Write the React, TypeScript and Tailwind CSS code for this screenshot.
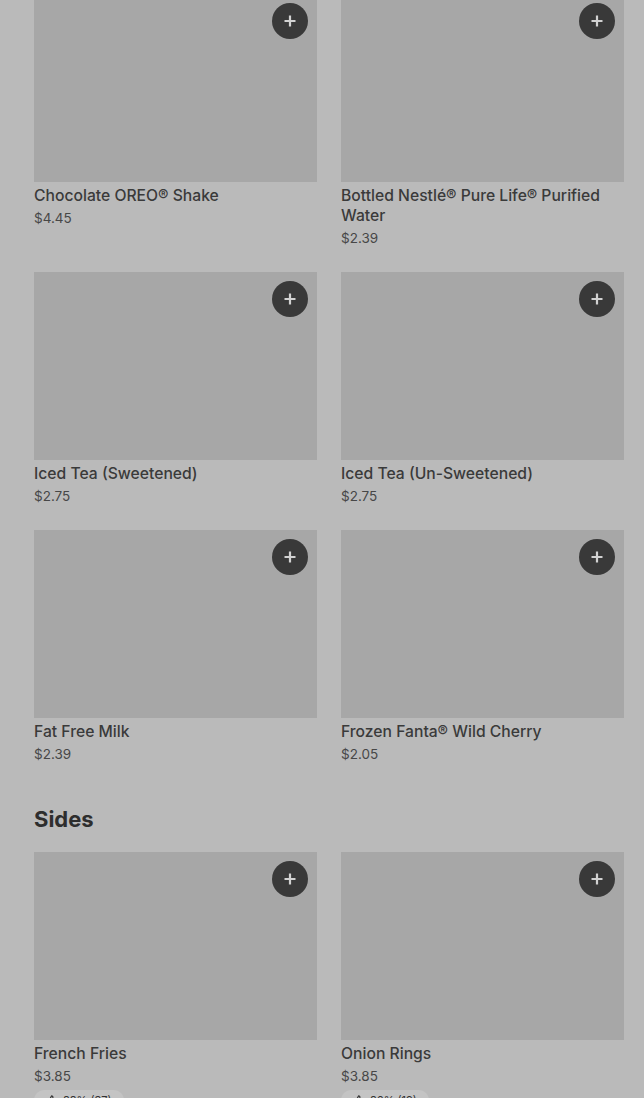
import { ThumbsUp } from "lucide-react";

type Item = { name: string; price: string; rating?: string };

const drinks: Item[] = [
  { name: "Chocolate OREO® Shake", price: "$4.45" },
  { name: "Bottled Nestlé® Pure Life® Purified Water", price: "$2.39" },
  { name: "Iced Tea (Sweetened)", price: "$2.75" },
  { name: "Iced Tea (Un-Sweetened)", price: "$2.75" },
  { name: "Fat Free Milk", price: "$2.39" },
  { name: "Frozen Fanta® Wild Cherry", price: "$2.05" },
];

const sides: Item[] = [
  { name: "French Fries", price: "$3.85", rating: "88% (37)" },
  { name: "Onion Rings", price: "$3.85", rating: "86% (19)" },
];

function AddButton() {
  return (
    <button className="absolute top-[9px] right-[9px] w-9 h-9 rounded-full bg-[#393939] flex items-center justify-center">
      <svg width="14" height="14" viewBox="0 0 14 14" fill="none">
        <path d="M7 1.5v11M1.5 7h11" stroke="#d2d2d2" strokeWidth="2.2" />
      </svg>
    </button>
  );
}

function ItemCard({ item }: { item: Item }) {
  return (
    <div className="flex flex-col">
      <div className="relative h-[188px] bg-[#a7a7a7]">
        <AddButton />
      </div>
      <div className="mt-[4px] text-[15.7px] leading-5 font-medium text-[#3a3a3a]">{item.name}</div>
      <div className="mt-[2px] text-[13.5px] leading-5 text-[#474747]">{item.price}</div>
      {item.rating && (
        <div className="mt-[4px] self-start flex items-center gap-1.5 rounded-full bg-[#c4c4c4] pl-3 pr-3 h-5 text-[11px] leading-5 text-[#333333]">
          <ThumbsUp size={11} strokeWidth={2.5} />
          <span>{item.rating}</span>
        </div>
      )}
    </div>
  );
}

export default function App() {
  return (
    <div className="w-[644px] h-[1098px] overflow-hidden bg-[#bababa] font-['Inter',sans-serif]">
      <div className="pl-[34px] pr-[20px] -mt-[6px]">
        <div className="grid grid-cols-2 gap-x-6 gap-y-6">
          {drinks.map((d) => (
            <ItemCard key={d.name} item={d} />
          ))}
        </div>
        <h2 className="mt-[39px] mb-[17px] text-[22px] leading-8 font-bold text-[#2e2e2e]">Sides</h2>
        <div className="grid grid-cols-2 gap-x-6 gap-y-6">
          {sides.map((d) => (
            <ItemCard key={d.name} item={d} />
          ))}
        </div>
      </div>
    </div>
  );
}
